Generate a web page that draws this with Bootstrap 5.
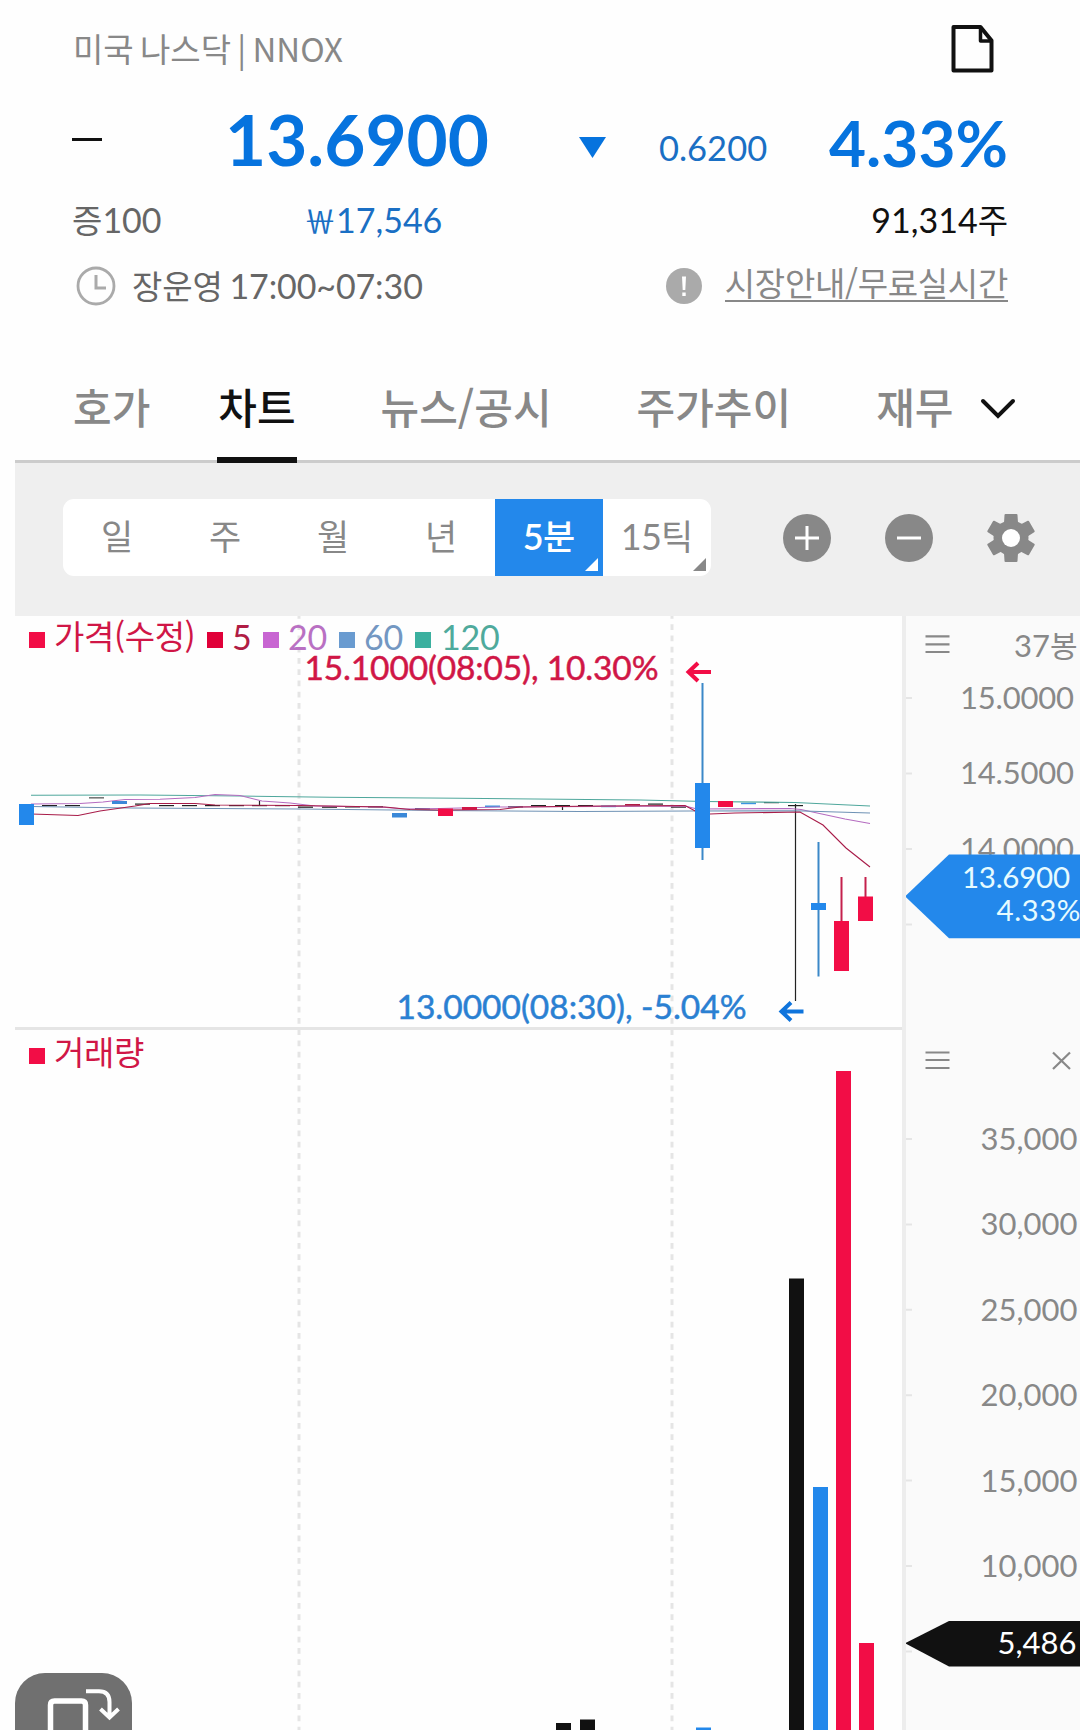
<!DOCTYPE html>
<html lang="ko">
<head>
<meta charset="utf-8">
<meta name="viewport" content="width=device-width, initial-scale=1">
<title>NNOX</title>
<link href="https://cdn.jsdelivr.net/npm/bootstrap@5.3.0/dist/css/bootstrap.min.css" rel="stylesheet">
<style>
:root{--down:#0673de;--down-soft:#1a6fc4;--blue:#2388eb;--red:#f20d46;--gray:#888;}
body{width:1080px;height:1730px;overflow:hidden;background:#fefefe;font-family:Lato,"Noto Sans CJK KR",sans-serif;color:#111;}
.ko{font-family:"Noto Sans CJK KR",sans-serif;font-size:33px;line-height:1;white-space:nowrap;}
.quote{height:391px;padding:24px 72px 0 72px;}
.q-title{height:48px;line-height:48px;color:var(--gray);padding-left:1px;}
.q-title .ko{line-height:48px;word-spacing:-3px;}
.doc-icon{margin-right:14px;}
.q-price{height:72px;margin-top:30px;line-height:72px;color:var(--down);}
.flat-mark{width:30px;height:3px;background:#111;margin-top:36px;}
.px-main{font-size:71px;margin-left:123px;font-weight:700;padding-top:1px;}
.px-tri{margin:35px 0 0 90px;}
.px-diff{font-size:34.5px;margin-left:53px;color:var(--down-soft);padding-top:10px;}
.px-pct{font-size:64px;font-weight:700;padding-top:5px;}
.q-sub{height:40px;line-height:40px;font-size:34px;margin-top:26px;}
.won{font-family:"Noto Sans CJK KR",sans-serif;font-size:32px;line-height:1;}
.hours{color:#666;margin-left:16px;word-spacing:-2px;letter-spacing:-.1px;}
.guide{color:#888;border-bottom:2px solid #888;height:36px;margin-left:23px;letter-spacing:-.3px;}
.guide.ko{line-height:33px;}
.tabs{height:72px;margin-left:15px;border-bottom:3px solid #ccc;padding-left:58px;}
.tabs .tab-item{font-family:"Noto Sans CJK KR",sans-serif;font-size:42px;line-height:37px;font-weight:500;color:var(--gray);text-decoration:none;height:72px;margin-top:-4px;white-space:nowrap;}
.tabs .tab-on{color:#111;border-bottom:6px solid #111;height:76px;padding:0 1px;}
.tools{height:153px;margin-left:15px;background:#efefef;padding:36px 45px 0 48px;}
.seg{width:648px;height:77px;background:#fff;border-radius:11px;overflow:hidden;color:var(--gray);font-size:36px;letter-spacing:-.8px;line-height:75px;}
.seg>div{width:108px;position:relative;text-align:center;}
.seg .ko{font-size:35px;letter-spacing:0;}
.seg .on{background:var(--blue);color:#fff;font-weight:600;}
.seg .on .ko{font-weight:500;}
.seg .corner::after{content:"";position:absolute;right:5px;bottom:5px;border-left:13px solid transparent;border-bottom:13px solid currentColor;}
.chart-wrap{height:1114px;margin-left:15px;}
.plot{width:887px;position:relative;}
.axis-col{width:178px;position:relative;background:#fafafa;border-left:4px solid #ededed;}
.axis-col svg,.plot svg{display:block;}
.legend{position:absolute;left:14px;height:40px;line-height:40px;font-size:34px;letter-spacing:-.2px;}
.legend span{margin-top:-7px;}
.legend span.ko{margin-top:-9px;letter-spacing:-.4px;}
.sq{width:16px;height:16px;display:inline-block;flex:none;}
.rot{position:absolute;left:0;bottom:0;width:117px;height:57px;background:#707070;border-radius:30px 30px 0 0;}
svg text{font-family:Lato,"Noto Sans CJK KR",sans-serif;}
</style>
<script src="https://cdn.jsdelivr.net/npm/bootstrap@5.3.0/dist/js/bootstrap.bundle.min.js"></script>
</head>
<body>
<header class="quote">
  <div class="q-title d-flex justify-content-between">
    <span class="ko">미국 나스닥 | NNOX</span>
    <svg width="44" height="50" viewBox="0 0 44 50" class="doc-icon flex-shrink-0" fill="none" stroke="#111" stroke-width="4" stroke-linejoin="round"><path d="M3.500 3H30.500L41.500 16.500V46.500H3.500Z"/><path d="M30.500 3V17H41.500" stroke-width="3.500"/></svg>
  </div>
  <div class="q-price d-flex">
    <div class="flat-mark"></div>
    <div class="px-main">13.6900</div>
    <svg class="px-tri" width="27" height="21" viewBox="0 0 27 21"><path d="M0 0H27L13.500 21Z" fill="#0673de"/></svg>
    <div class="px-diff">0.6200</div>
    <div class="px-pct ms-auto">4.33%</div>
  </div>
  <div class="q-sub d-flex">
    <div style="color:#666;width:232px"><span class="ko">증</span>100</div>
    <div style="color:#1a6fc4"><span class="won">￦</span>17,546</div>
    <div class="ms-auto">91,314<span class="ko">주</span></div>
  </div>
  <div class="q-sub d-flex">
    <svg width="40" height="40" viewBox="0 0 40 40" fill="none" stroke="#aaa" class="ms-1"><circle cx="20" cy="20" r="18" stroke-width="2.800"/><path d="M20 9V22H30" stroke-width="3"/></svg>
    <div class="hours"><span class="ko">장운영</span> 17:00~07:30</div>
    <svg class="ms-auto" width="36" height="36" viewBox="0 0 36 36" style="margin-top:2px"><circle cx="18" cy="18" r="18" fill="#aaa"/><path d="M16 8.500H20L19.300 22H16.700ZM16.300 24.500H19.700V28H16.300Z" fill="#fff"/></svg>
    <div class="guide ko">시장안내/무료실시간</div>
  </div>
</header>

<nav class="tabs d-flex">
  <a class="tab-item">호가</a>
  <a class="tab-item tab-on" style="margin-left:67px">차트</a>
  <a class="tab-item" style="margin-left:84px">뉴스/공시</a>
  <a class="tab-item" style="margin-left:85px">주가추이</a>
  <a class="tab-item" style="margin-left:85px">재무</a>
  <svg width="36" height="22" viewBox="0 0 36 22" style="margin:7px 0 0 27px" fill="none" stroke="#111" stroke-width="4" stroke-linecap="round"><path d="M3 3L18 18L33 3"/></svg>
</nav>

<section class="tools d-flex">
  <div class="seg d-flex">
    <div><span class="ko">일</span></div><div><span class="ko">주</span></div><div><span class="ko">월</span></div><div><span class="ko">년</span></div>
    <div class="on corner">5<span class="ko">분</span></div>
    <div class="corner">15<span class="ko">틱</span></div>
  </div>
  <div class="d-flex justify-content-between ms-auto" style="width:252px;padding-top:15px">
    <svg width="48" height="48" viewBox="0 0 48 48"><circle cx="24" cy="24" r="24" fill="#888"/><path d="M24 12V36M12 24H36" stroke="#fff" stroke-width="3"/></svg>
    <svg width="48" height="48" viewBox="0 0 48 48"><circle cx="24" cy="24" r="24" fill="#888"/><path d="M12 24H36" stroke="#fff" stroke-width="3"/></svg>
    <svg width="48" height="48" viewBox="-24 -24 48 48"><g fill="#888"><circle r="17.500"/><g id="tooth"><path d="M-7 -15L-6.500 -23Q-6.500 -24 -5.500 -24H5.500Q6.500 -24 6.500 -23L7 -15V15L6.500 23Q6.500 24 5.500 24H-5.500Q-6.500 24 -6.500 23L-7 15Z"/></g><use href="#tooth" transform="rotate(60)"/><use href="#tooth" transform="rotate(120)"/></g><circle r="9" fill="#fff"/></svg>
  </div>
</section>

<main class="chart-wrap d-flex">
  <div class="plot">
    <svg width="887" height="1114" viewBox="15 616 887 1114">
      <g stroke="#e5e5e5" stroke-width="3"><path d="M299 613V1730M672 613V1730" stroke-dasharray="5.700 5.550"/><path d="M15 1028.500H902"/></g>
      <g id="candles"></g>
      <g fill="none" stroke-width="1.100">
        <path stroke="#4fa79c" d="M31 795.300L140 795L240 796L330 797.300L460 798.300L640 800L705 801.500L795 802.500L870 806"/>
        <path stroke="#b56cc0" d="M31 804L80 803.500L103 802L125 799.500L160 799.300L195 797.500L215 794.500L240 795.500L262 801L290 803L315 806L380 807L405 809L440 808.500L500 807L600 806.500L685 806L697 809L790 808.500L801 809.500L845 819L870 823.500"/>
        <path stroke="#6f92b5" d="M31 806.500L130 808L300 809L440 810.500L580 811.500L690 811L795 810.800L870 813"/>
        <path stroke="#a81c49" d="M31 814L78 815.500L100 811L135 806L150 803.500L195 803.500L215 805L300 805.500L385 807L410 809.500L440 810L500 809.500L520 807L600 806L685 805.500L697 812L710 814L735 813L800 812L823 825L846 848L870 867"/>
      </g>
      <g id="front"></g>
      <g id="volumes"></g>
      <g font-size="33.500" stroke-width=".5">
        <text x="304.500" y="680" textLength="354" fill="#d01646" stroke="#d01646">15.1000(08:05), 10.30%</text>
        <text x="396.500" y="1019" textLength="350" fill="#2a80d2" stroke="#2a80d2">13.0000(08:30), -5.04%</text>
      </g>
      <g fill="none" stroke-width="4"><path stroke="#f20d46" d="M711 672H689M698 663L688.500 672L698 681"/><path stroke="#0f74dc" d="M803.500 1011.500H782M791 1002.500L781.500 1011.500L791 1020.500"/></g>
    </svg>
    <div class="legend d-flex align-items-center" style="top:4px">
      <i class="sq" style="background:#f20d46"></i><span class="ko" style="margin-left:9px;color:#d01646;width:140px">가격(수정)</span>
      <i class="sq" style="background:#e00038;margin-left:13px"></i><span style="margin-left:9px;color:#b01c44;width:31px">5</span>
      <i class="sq" style="background:#c865d2"></i><span style="margin-left:9px;color:#b970c3;width:51px">20</span>
      <i class="sq" style="background:#699bd0"></i><span style="margin-left:9px;color:#7397c2;width:51px">60</span>
      <i class="sq" style="background:#3bb09f"></i><span style="margin-left:10px;color:#4faa9c">120</span>
    </div>
    <div class="legend d-flex align-items-center" style="top:420px">
      <i class="sq" style="background:#f20d46"></i><span class="ko" style="margin-left:9px;color:#d01646">거래량</span>
    </div>
    <div class="rot"><svg width="117" height="57" viewBox="15 1673 117 57" fill="none" stroke="#fff"><path d="M50.500 1732V1705Q50.500 1701 54.500 1701H81.500Q85.500 1701 85.500 1705V1732" stroke-width="5.500"/><path d="M86 1691.300H99Q109.500 1691.300 109.500 1702V1717M100.500 1709L109.500 1717.500L118.500 1709" stroke-width="4"/></svg></div>
  </div>
  <div class="axis-col">
    <svg width="174" height="1114" viewBox="906 616 174 1114">
      <path id="ticks" stroke="#e5e5e5" stroke-width="2" d=""/>
      <g stroke="#888" stroke-width="2.200"><path d="M925.500 636.300H949.500M925.500 644.300H949.500M925.500 652H949.500M925.500 1052.500H949.500M925.500 1060H949.500M925.500 1068H949.500M1053 1052.500L1070 1069M1070 1052.500L1053 1069"/></g>
      <g id="labels" fill="#888" font-size="31"><text x="1014" y="656.700">37<tspan font-size="30">봉</tspan></text></g>
      <path fill="#2388eb" d="M905 896.400L949 854.600H1080V938.200H949Z"/>
      <g fill="#e6fbff" font-size="29.500"><text x="962" y="888" textLength="108">13.6900</text><text x="996.500" y="921" textLength="84">4.33%</text></g>
      <path fill="#111" d="M905 1643.300L949 1621H1080V1666.500H949Z"/>
      <text x="1076.500" y="1654" text-anchor="end" font-size="31" fill="#fff">5,486</text>
    </svg>
  </div>
</main>
<script>
// [index, colour, body top, body bottom, wick top, wick bottom]
const K='#222',B='#2388eb',R='#f20d46';
const candles=[[0,B,804,825],[1,K,805,806.2],[2,K,805,806.2],[3,'#777',797,798.6],[4,'#3a88d8',801,804],[5,K,803.5,804.7],
[6,K,805,806.2],[7,K,805,806.2],[8,K,805,806.2],[9,K,805,806.2],[10,K,805,806.2,801,806],[11,K,805,806.2],
[12,K,806.5,807.8],[13,K,806.5,807.8],[14,K,806.2,807.5],[15,K,806.2,807.5],[16,'#3a88d8',813,817.5],[17,K,808,809.3],[18,R,808.5,816],
[19,'#d01646',807,810],[20,'#3a94e0',805.5,807.2],[21,K,806.2,807.5],[22,K,805,806.2],[23,K,805,806.2,805,810],[24,K,805,806.2],
[25,'#3a94e0',805.5,807.2],[26,'#b01c44',804,805.5],[27,K,803.5,804.7],[28,K,806.5,807.7],[29,B,783,848,683,860],[30,R,801,807],
[31,'#3a94e0',802.7,804.2],[32,K,802,803.2],[33,K,805,806.2,804,1001],[34,B,903,910,842,976.5],[35,R,921,971,877,921],[36,R,896.5,921,877,897]];
const rect=(x,y,w,h,c)=>`<rect x="${x}" y="${y}" width="${w}" height="${h}" fill="${c}"/>`;
let back='',front='';
for(const [i,c,t,b,wt,wb] of candles){
  const x=26.3+23.3*i,l=Math.round(x-7.5);let s='';
  if(wt){const w=c===K?1.2:2;s+=rect(l+7.5-w/2,wt,w,wb-wt,c===B?'#3b88c8':c===R?'#c4204c':c);}
  s+=rect(l,t,15,b-t,c);
  if(b-t>2.5)front+=s;else back+=s;
}
document.getElementById('candles').innerHTML=back;
document.getElementById('front').innerHTML=front;
document.getElementById('volumes').innerHTML=[[556,1723,'#111'],[580,1719.5,'#111'],[696,1727.5,B],[789,1278.5,'#111'],[813,1487,B],[836,1071,R],[859,1643,R]].map(v=>rect(v[0],v[1],15,1730-v[1],v[2])).join('');
let d='',L='';
['15.0000','14.5000','14.0000',''].forEach((t,i)=>{const y=697.9+75.5*i;d+=`M905 ${y}H912`;if(t)L+=`<text x="960" y="${y+11}" textLength="114">${t}</text>`;});
['35,000','30,000','25,000','20,000','15,000','10,000',''].forEach((t,i)=>{const y=1139+85.4*i;d+=`M905 ${y}H912`;if(t)L+=`<text x="1077.5" y="${y+11}" text-anchor="end">${t}</text>`;});
document.getElementById('ticks').setAttribute('d',d);
document.getElementById('labels').insertAdjacentHTML('beforeend',L);
</script>
</body>
</html>
